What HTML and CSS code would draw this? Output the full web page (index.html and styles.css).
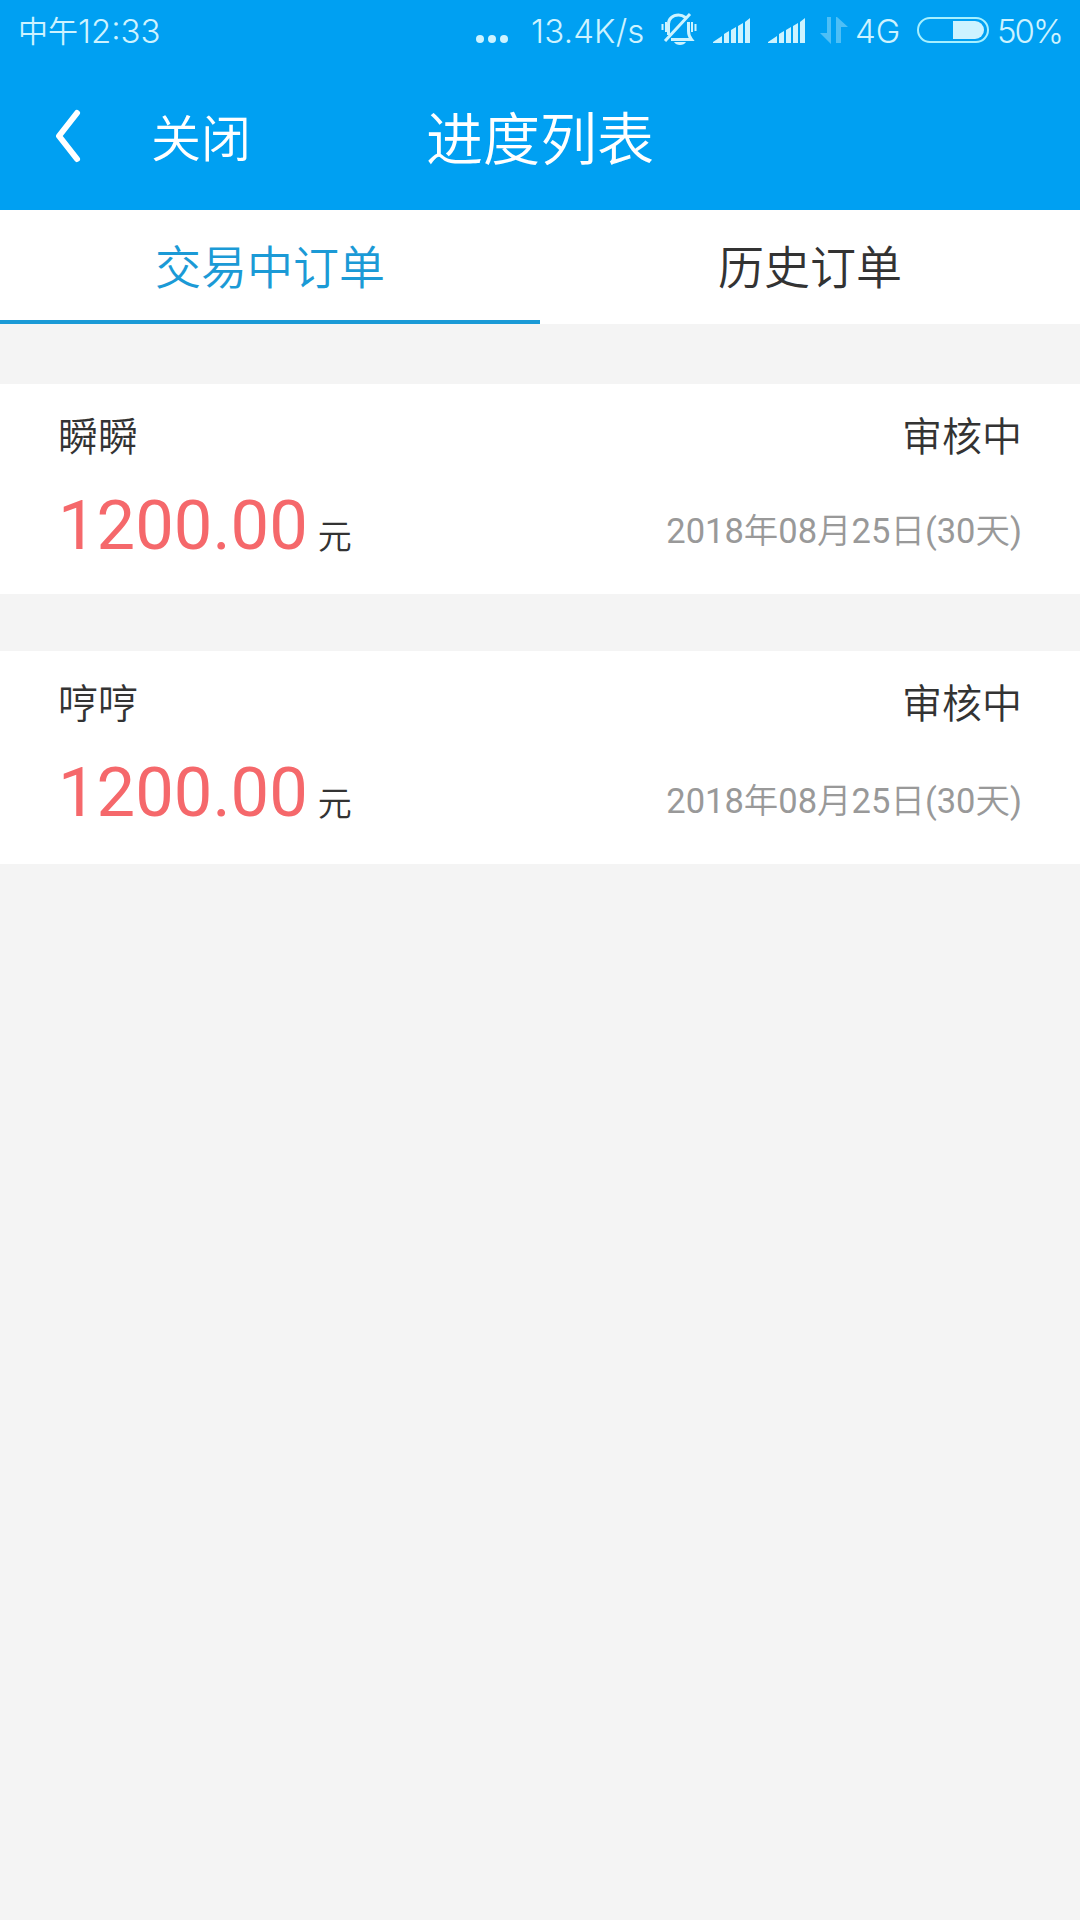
FILE: index.html
```html
<!DOCTYPE html>
<html lang="zh-CN">
<head>
<meta charset="utf-8">
<title>进度列表</title>
<link rel="stylesheet" href="styles.css">
</head>
<body>
<header class="header">
  <div class="status">
    <span class="time"><span class="noon">中午</span><span>12:33</span></span>
    <div class="indicators">
      <svg class="dots" width="32" height="64" viewBox="0 0 32 64"><circle cx="4" cy="39" r="4"/><circle cx="16" cy="39" r="4"/><circle cx="28" cy="39" r="4"/></svg>
      <span class="speed">13.4K/s</span>
      <svg class="bell" width="36" height="64" viewBox="661 0 36 64">
        <path class="line" d="M668.500 35V24c0-5 4-9 10-9 3 0 5 1 7 2.500M688.500 22v9c0 4 1 6 3 8.500H671M665 41l25-27"/>
        <path d="M674 42h12c-2 4-10 4-12 0z"/>
        <path class="thin" d="M662.500 24v6M666 22v10M692 22v10M695.500 24v7"/>
      </svg>
      <svg class="signal" width="37" height="64" viewBox="0 0 37 64"><path d="M0 43v-1l9-6v7zM11 43v-9l5-3v12zM18 43v-13l5-3v16zM25 43v-17l5-3v20zM32 43v-21l5-4v25z"/></svg>
      <svg class="signal second" width="37" height="64" viewBox="0 0 37 64"><path d="M0 43v-1l9-6v7zM11 43v-9l5-3v12zM18 43v-13l5-3v16zM25 43v-17l5-3v20zM32 43v-21l5-4v25z"/></svg>
      <svg class="data" width="28" height="64" viewBox="0 0 28 64"><path d="M7 17h4v27L0 33h7zM17 43h-1V17h1l11 10h-7v16z"/></svg>
      <span class="network">4G</span>
      <svg class="battery" width="72" height="64" viewBox="0 0 72 64"><rect class="shell" x="1" y="18" width="70" height="24" rx="12"/><path d="M36 21h22a9 9 0 0 1 0 18H36z"/></svg>
      <span class="percent">50%</span>
    </div>
  </div>
  <nav class="navbar">
    <svg class="back" width="26" height="54" viewBox="0 0 26 54"><path d="M22 4L4 27l18 23"/></svg>
    <span class="close">关闭</span>
    <h1 class="title">进度列表</h1>
  </nav>
</header>
<div class="tabs">
  <div class="tab active">交易中订单</div>
  <div class="tab">历史订单</div>
</div>
<main class="orders">
  <section class="order">
    <div class="row"><span class="name">瞬瞬</span><span class="state">审核中</span></div>
    <div class="row detail"><span class="amount">1200.00<span class="unit">元</span></span><span class="date">2018<i>年</i>08<i>月</i>25<i>日</i>(30<i>天</i>)</span></div>
  </section>
  <section class="order tall">
    <div class="row"><span class="name">哼哼</span><span class="state">审核中</span></div>
    <div class="row detail"><span class="amount">1200.00<span class="unit">元</span></span><span class="date">2018<i>年</i>08<i>月</i>25<i>日</i>(30<i>天</i>)</span></div>
  </section>
</main>
</body>
</html>
```
FILE: styles.css
```css
* { box-sizing: border-box; }
body {
  margin: 0;
  min-height: 1920px;
  background: #f4f4f4;
  color: #333;
  font-family: Roboto, "Noto Sans CJK SC", sans-serif;
  font-weight: 350;
}
svg { display: block; flex: none; }
.header { height: 210px; background: #00a0f2; color: #fff; }
.status {
  display: flex;
  justify-content: space-between;
  height: 64px;
  padding: 0 18px;
  color: #cdf3ff;
  font-family: Inter, "Noto Sans CJK SC", sans-serif;
  font-weight: 300;
  font-size: 33px;
  line-height: 63px;
  white-space: nowrap;
}
.status svg { fill: #cdf3ff; }
.time { display: flex; }
.noon { width: 60px; font-size: 30px; font-weight: 350; }
.indicators { display: flex; width: 586px; }
.indicators span { flex: none; }
.indicators .speed { width: 114px; margin-left: 23px; letter-spacing: .2px; }
.bell { margin-left: 16px; }
.bell .line { fill: none; stroke: #cdf3ff; stroke-width: 3; }
.bell .thin { fill: none; stroke: #cdf3ff; stroke-width: 2; }
.signal { margin-left: 16px; }
.second { margin-left: 18px; }
.data { margin-left: 15px; opacity: .38; }
.network { width: 46px; margin-left: 7px; }
.battery { margin-left: 16px; }
.battery .shell { fill: none; stroke: #a6f0ff; stroke-width: 2; }
.percent { margin-left: 8px; letter-spacing: -2px; }
.navbar {
  display: grid;
  grid-template-columns: 151px 230px 318px 1fr;
  align-items: center;
  height: 146px;
  padding-top: 6px;
}
.back { margin: -9px 0 0 55px; fill: none; stroke: #fff; stroke-width: 6; stroke-linecap: round; stroke-linejoin: round; }
.close { font-size: 50px; line-height: 70px; }
.title { margin: 0; padding-top: 2px; font-size: 57px; font-weight: 350; line-height: 80px; text-align: center; }
.tabs { display: flex; height: 114px; background: #fff; }
.tab {
  flex: 1;
  height: 114px;
  padding-top: 2px;
  border-bottom: 4px solid transparent;
  font-size: 46px;
  line-height: 112px;
  text-align: center;
}
.tab.active { border-color: #1b9ad6; color: #1b9ad6; }
.orders { padding-top: 60px; }
.order {
  display: flex;
  flex-direction: column;
  height: 210px;
  margin-bottom: 57px;
  padding: 24px 58px 15px;
  background: #fff;
}
.order.tall { height: 213px; }
.row { display: flex; justify-content: space-between; font-size: 40px; line-height: 60px; }
.detail { flex: 1; min-height: 0; padding-top: 13px; line-height: 90px; }
.amount { color: #f5686b; font-size: 68.700px; font-weight: 400; }
.unit { margin-left: 10px; color: #333; font-size: 34px; font-weight: 350; }
.date {
  align-self: flex-end;
  margin-bottom: 18px;
  color: #999;
  font-size: 34.500px;
  font-weight: 400;
  line-height: 60px;
}
.date i { font-style: normal; font-weight: 350; }
```
